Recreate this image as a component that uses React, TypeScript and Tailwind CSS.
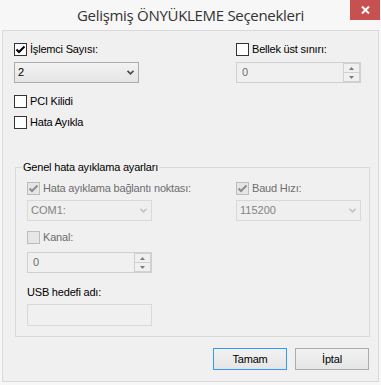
import React from 'react';

// Windows 8 style "Advanced BOOT Options" dialog

type CheckProps = { label: string; checked?: boolean; disabled?: boolean };

function CheckBox({ checked, disabled }: { checked?: boolean; disabled?: boolean }) {
    return (
        <span
            className={`w-[13px] h-[13px] shrink-0 border flex items-center justify-center ${
                disabled ? 'border-[#bcbcbc] bg-[#e6e6e6]' : 'border-[#333333] bg-white'
            }`}
        >
            {checked && (
                <svg width="11" height="11" viewBox="0 0 11 11">
                    <path
                        d="M1.5 5.5 L4 8 L9.5 2.5"
                        fill="none"
                        stroke={disabled ? '#8c8c8c' : '#000000'}
                        strokeWidth="2"
                    />
                </svg>
            )}
        </span>
    );
}

function Check({ label, checked, disabled }: CheckProps) {
    return (
        <div className="h-[13px] flex items-center gap-[3px]">
            <CheckBox checked={checked} disabled={disabled} />
            <span
                className={`text-[11px] leading-[13px] tracking-[-0.2px] whitespace-nowrap ${
                    disabled ? 'text-[#6d6d6d]' : 'text-black'
                }`}
            >
                {label}
            </span>
        </div>
    );
}

function Select({ value, disabled }: { value: string; disabled?: boolean }) {
    return (
        <div
            className={`h-[21px] w-[125px] border flex items-center pl-[3px] pr-[4px] ${
                disabled
                    ? 'border-[#d9d9d9] bg-[#efefef] text-[#838383]'
                    : 'border-[#acacac] bg-linear-to-b from-[#f2f2f2] to-[#e6e6e6] text-black'
            }`}
        >
            <span className="flex-1 text-[11px] leading-[13px]">{value}</span>
            <svg width="7" height="5" viewBox="0 0 7 5">
                <path
                    d="M0.5 0.8 L3.5 3.8 L6.5 0.8"
                    fill="none"
                    stroke={disabled ? '#c4c4c4' : '#4a4a4a'}
                    strokeWidth="1.7"
                />
            </svg>
        </div>
    );
}

function Spin({ value }: { value: string }) {
    return (
        <div className="h-[21px] w-[125px] border border-[#d0d0d0] bg-[#f0f0f0] flex">
            <span className="flex-1 pl-[5px] text-[11px] leading-[19px] text-[#6d6d6d]">{value}</span>
            <div className="w-[17px] flex flex-col">
                <div className="flex-1 border border-[#d0d0d0] bg-[#f0f0f0] flex items-center justify-center">
                    <svg width="5" height="3" viewBox="0 0 5 3">
                        <path d="M0 3 L2.5 0 L5 3 Z" fill="#7a7a7a" />
                    </svg>
                </div>
                <div className="flex-1 border border-t-0 border-[#d0d0d0] bg-[#f0f0f0] flex items-center justify-center">
                    <svg width="5" height="3" viewBox="0 0 5 3">
                        <path d="M0 0 L5 0 L2.5 3 Z" fill="#7a7a7a" />
                    </svg>
                </div>
            </div>
        </div>
    );
}

function Button({ label, focused }: { label: string; focused?: boolean }) {
    return (
        <button
            className={`w-[74px] h-[22px] border bg-linear-to-b from-[#f2f2f2] to-[#e5e5e5] text-[11px] tracking-[-0.2px] text-black ${
                focused ? 'border-[#3399ff]' : 'border-[#acacac]'
            }`}
        >
            {label}
        </button>
    );
}

export default function App() {
    return (
        <div className="w-[381px] h-[385px] bg-[#f7f7f7] flex flex-col font-['Liberation_Sans',sans-serif]">
            {/* Title bar */}
            <div className="relative h-[30px] shrink-0 flex items-center justify-center">
                <span className="font-['Open_Sans',sans-serif] text-[15px] text-[#333333] tracking-[-0.3px] leading-none">
                    Gelişmiş ÖNYÜKLEME Seçenekleri
                </span>
                <div className="absolute top-0 right-[1px] w-[30px] h-[20px] bg-[#c75050] flex items-center justify-center">
                    <svg width="9" height="8" viewBox="0 0 9 8">
                        <path d="M1 0.5 L8 7.5 M8 0.5 L1 7.5" stroke="#ffffff" strokeWidth="2" />
                    </svg>
                </div>
            </div>

            {/* Client area */}
            <div className="mx-[2px] mb-[3px] flex-1 border border-[#d9d9d9] bg-[#f0f0f0] flex flex-col">
                {/* Top options */}
                <div className="flex pl-[11px] pt-[12px]">
                    <div className="w-[125px] flex flex-col">
                        <Check label="İşlemci Sayısı:" checked />
                        <div className="mt-[6px]">
                            <Select value="2" />
                        </div>
                        <div className="mt-[12px]">
                            <Check label="PCI Kilidi" />
                        </div>
                        <div className="mt-[8px]">
                            <Check label="Hata Ayıkla" />
                        </div>
                    </div>
                    <div className="ml-[97px] w-[125px] flex flex-col">
                        <Check label="Bellek üst sınırı:" />
                        <div className="mt-[6px]">
                            <Spin value="0" />
                        </div>
                    </div>
                </div>

                {/* Group box */}
                <div className="relative ml-[12px] mt-[38px] w-[355px] h-[170px] border border-[#d9d9d9] pl-[11px] pt-[14px]">
                    <span className="absolute -top-[7px] left-[6px] px-[1px] bg-[#f0f0f0] text-[11px] leading-[13px] tracking-[-0.2px] text-black whitespace-nowrap">
                        Genel hata ayıklama ayarları
                    </span>
                    <div className="flex">
                        <div className="w-[125px] flex flex-col">
                            <Check label="Hata ayıklama bağlantı noktası:" checked disabled />
                            <div className="mt-[5px]">
                                <Select value="COM1:" disabled />
                            </div>
                        </div>
                        <div className="ml-[84px] w-[125px] flex flex-col">
                            <Check label="Baud Hızı:" checked disabled />
                            <div className="mt-[5px]">
                                <Select value="115200" disabled />
                            </div>
                        </div>
                    </div>
                    <div className="mt-[10px]">
                        <Check label="Kanal:" disabled />
                    </div>
                    <div className="mt-[8px]">
                        <Spin value="0" />
                    </div>
                    <div className="mt-[13px] h-[13px] text-[11px] leading-[13px] tracking-[-0.2px] text-black">
                        USB hedefi adı:
                    </div>
                    <div className="mt-[5px] w-[125px] h-[22px] border border-[#d9d9d9] bg-[#f0f0f0]" />
                </div>

                {/* Buttons */}
                <div className="mt-[11px] pr-[9px] flex justify-end gap-[8px]">
                    <Button label="Tamam" focused />
                    <Button label="İptal" />
                </div>
            </div>
        </div>
    );
}
